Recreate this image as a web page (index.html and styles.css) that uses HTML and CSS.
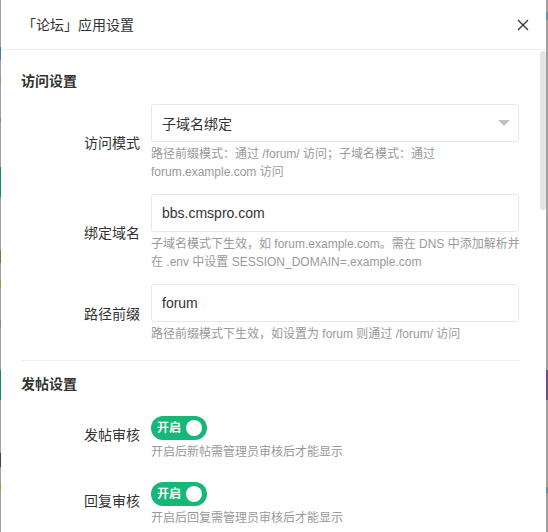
FILE: index.html
```html
<!DOCTYPE html>
<html lang="zh-CN">
<head>
<meta charset="utf-8">
<title>「论坛」应用设置</title>
<link rel="stylesheet" href="styles.css">
</head>
<body>
<div class="dialog">
  <div class="dlg-head">
    <span class="dlg-title">「论坛」应用设置</span>
    <span class="dlg-close" aria-label="关闭">
      <svg width="12" height="12" viewBox="0 0 12 12"><path d="M1 1L11 11M11 1L1 11" stroke="#333" stroke-width="1.3" fill="none"/></svg>
    </span>
  </div>
  <div class="dlg-body">
    <div class="dlg-content">
      <div class="section-title">访问设置</div>

      <div class="form-row">
        <div class="label">访问模式</div>
        <div class="field">
          <div class="input select"><span>子域名绑定</span><i class="caret"></i></div>
          <div class="help">路径前缀模式：通过 /forum/ 访问；子域名模式：通过<br>forum.example.com 访问</div>
        </div>
      </div>

      <div class="form-row">
        <div class="label">绑定域名</div>
        <div class="field">
          <div class="input">bbs.cmspro.com</div>
          <div class="help">子域名模式下生效，如 forum.example.com。需在 DNS 中添加解析并<br>在 .env 中设置 SESSION_DOMAIN=.example.com</div>
        </div>
      </div>

      <div class="form-row">
        <div class="label">路径前缀</div>
        <div class="field">
          <div class="input">forum</div>
          <div class="help">路径前缀模式下生效，如设置为 forum 则通过 /forum/ 访问</div>
        </div>
      </div>

      <div class="divider"></div>

      <div class="section-title second">发帖设置</div>

      <div class="form-row">
        <div class="label">发帖审核</div>
        <div class="field">
          <div class="switch"><span class="switch-text">开启</span><i class="knob"></i></div>
          <div class="help">开启后新帖需管理员审核后才能显示</div>
        </div>
      </div>

      <div class="form-row">
        <div class="label">回复审核</div>
        <div class="field">
          <div class="switch"><span class="switch-text">开启</span><i class="knob"></i></div>
          <div class="help">开启后回复需管理员审核后才能显示</div>
        </div>
      </div>
    </div>
    <div class="scrollbar"><div class="thumb"></div></div>
  </div>
</div>
</body>
</html>
```
FILE: styles.css
```css
html, body {
  margin: 0;
  padding: 0;
}
body {
  width: 548px;
  height: 532px;
  overflow: hidden;
  font-family: "Liberation Sans", "Noto Sans CJK SC", sans-serif;
  color: #333;
  background-color: #a0a0a0;
  background-image:
    linear-gradient(to bottom,
      transparent 47px, #3f7fae 47px, #3f7fae 60px, transparent 60px,
      transparent 77px, #9c9a40 77px, #9c9a40 83px, transparent 83px,
      transparent 117px, #7d8a98 117px, #7d8a98 123px, transparent 123px,
      transparent 167px, #17895a 167px, #17895a 197px, transparent 197px,
      transparent 250px, #8c6c3c 250px, #8c6c3c 263px, transparent 263px,
      transparent 280px, #9c9a40 280px, #9c9a40 287px, transparent 287px,
      transparent 320px, #7d8a98 320px, #7d8a98 327px, transparent 327px,
      transparent 370px, #17895a 370px, #17895a 400px, transparent 400px,
      transparent 453px, #444 453px, #444 467px, transparent 467px,
      transparent 483px, #9c9a40 483px, #9c9a40 490px, transparent 490px),
    linear-gradient(to bottom,
      transparent 12px, #6c8aa0 12px, #6c8aa0 20px, transparent 20px,
      transparent 370px, #6a4c8c 370px, #6a4c8c 400px, transparent 400px,
      transparent 487px, #6c8aa0 487px, #6c8aa0 493px, transparent 493px);
  background-size: 1px 532px, 2px 532px;
  background-position: left top, right top;
  background-repeat: no-repeat;
}

.dialog {
  margin-left: 1px;
  width: 545px;
  height: 532px;
  background: #fff;
  display: flex;
  flex-direction: column;
  overflow: hidden;
}

.dlg-head {
  height: 49px;
  flex-shrink: 0;
  border-bottom: 1px solid #eeeeee;
  display: flex;
  align-items: center;
  justify-content: space-between;
  padding: 0 17px 0 21px;
}
.dlg-title {
  font-size: 14px;
  color: #333;
  line-height: 20px;
}
.dlg-close {
  display: flex;
  width: 12px;
  height: 12px;
}

.dlg-body {
  flex: 1;
  display: flex;
  overflow: hidden;
}
.dlg-content {
  flex: 1;
  padding: 21px 21px 0 20px;
}
.scrollbar {
  width: 6px;
  flex-shrink: 0;
}
.thumb {
  margin-top: 1px;
  height: 159px;
  background: #e4e4e4;
  border-radius: 3px;
}

.section-title {
  font-size: 14px;
  font-weight: bold;
  line-height: 20px;
  color: #333;
  margin-bottom: 13px;
}
.section-title.second {
  margin-top: 13px;
  margin-bottom: 14px;
}

.form-row {
  display: flex;
  align-items: center;
  margin-bottom: 13px;
}
.label {
  width: 119px;
  flex-shrink: 0;
  margin-right: 11px;
  text-align: right;
  font-size: 14px;
  line-height: 20px;
  color: #333;
}
.field {
  width: 368px;
  display: flex;
  flex-direction: column;
  align-items: flex-start;
}
.input {
  box-sizing: border-box;
  width: 100%;
  height: 38px;
  border: 1px solid #e8e8e8;
  border-radius: 3px;
  padding: 0 10px;
  display: flex;
  align-items: center;
  font-size: 14px;
  color: #333;
}
.select {
  justify-content: space-between;
  padding-right: 8px;
}
.caret {
  width: 0;
  height: 0;
  border-left: 6px solid transparent;
  border-right: 6px solid transparent;
  border-top: 6px solid #c2c2c2;
  margin-top: -1px;
}
.help {
  margin-top: 3px;
  font-size: 12px;
  line-height: 18px;
  color: #999;
  white-space: nowrap;
}

.divider {
  height: 1px;
  background: #eeeeee;
  margin-top: 17px;
}

.switch {
  box-sizing: border-box;
  margin-top: 8px;
  width: 56px;
  height: 24px;
  padding: 0 5px 0 6px;
  border-radius: 12px;
  background: #16b777;
  display: flex;
  align-items: center;
}
.switch-text {
  font-size: 12px;
  font-weight: bold;
  color: #fff;
  line-height: 16px;
}
.knob {
  margin-left: auto;
  width: 16px;
  height: 16px;
  border-radius: 50%;
  background: #fff;
}
```
